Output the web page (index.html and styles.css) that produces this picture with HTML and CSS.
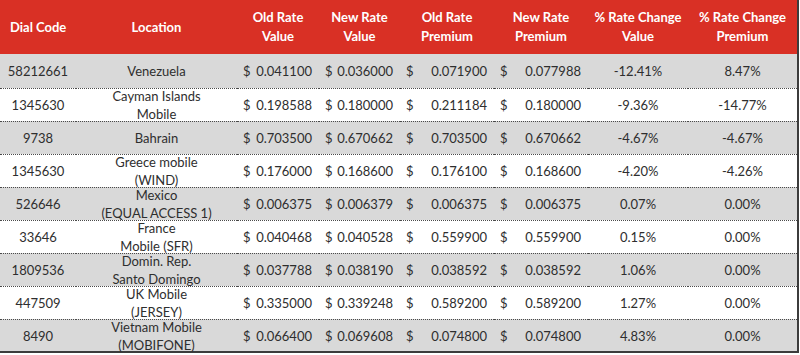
FILE: index.html
```html
<!DOCTYPE html>
<html lang="en">
<head>
    <meta charset="UTF-8">
    <title>Rate Changes</title>
    <link rel="stylesheet" href="styles.css">
</head>
<body>
    <table class="rates">
        <colgroup>
            <col class="c-dial">
            <col class="c-loc">
            <col class="c-old">
            <col class="c-new">
            <col class="c-oldp">
            <col class="c-newp">
            <col class="c-pv">
            <col class="c-pp">
        </colgroup>
        <thead>
            <tr>
                <th class="left">Dial Code</th>
                <th>Location</th>
                <th>Old Rate<br>Value</th>
                <th>New Rate<br>Value</th>
                <th>Old Rate<br>Premium</th>
                <th>New Rate<br>Premium</th>
                <th>% Rate Change<br>Value</th>
                <th>% Rate Change<br>Premium</th>
            </tr>
        </thead>
        <tbody>
            <tr class="shade">
                <td><div class="cell">58212661</div></td>
                <td><div class="cell">Venezuela</div></td>
                <td><div class="money"><span>$</span><span>0.041100</span></div></td>
                <td><div class="money"><span>$</span><span>0.036000</span></div></td>
                <td><div class="money"><span>$</span><span>0.071900</span></div></td>
                <td><div class="money"><span>$</span><span>0.077988</span></div></td>
                <td><div class="cell">-12.41%</div></td>
                <td><div class="cell">8.47%</div></td>
            </tr>
            <tr>
                <td><div class="cell">1345630</div></td>
                <td><div class="cell"><span>Cayman Islands</span><span>Mobile</span></div></td>
                <td><div class="money"><span>$</span><span>0.198588</span></div></td>
                <td><div class="money"><span>$</span><span>0.180000</span></div></td>
                <td><div class="money"><span>$</span><span>0.211184</span></div></td>
                <td><div class="money"><span>$</span><span>0.180000</span></div></td>
                <td><div class="cell">-9.36%</div></td>
                <td><div class="cell">-14.77%</div></td>
            </tr>
            <tr class="shade">
                <td><div class="cell">9738</div></td>
                <td><div class="cell">Bahrain</div></td>
                <td><div class="money"><span>$</span><span>0.703500</span></div></td>
                <td><div class="money"><span>$</span><span>0.670662</span></div></td>
                <td><div class="money"><span>$</span><span>0.703500</span></div></td>
                <td><div class="money"><span>$</span><span>0.670662</span></div></td>
                <td><div class="cell">-4.67%</div></td>
                <td><div class="cell">-4.67%</div></td>
            </tr>
            <tr>
                <td><div class="cell">1345630</div></td>
                <td><div class="cell"><span>Greece mobile</span><span>(WIND)</span></div></td>
                <td><div class="money"><span>$</span><span>0.176000</span></div></td>
                <td><div class="money"><span>$</span><span>0.168600</span></div></td>
                <td><div class="money"><span>$</span><span>0.176100</span></div></td>
                <td><div class="money"><span>$</span><span>0.168600</span></div></td>
                <td><div class="cell">-4.20%</div></td>
                <td><div class="cell">-4.26%</div></td>
            </tr>
            <tr class="shade">
                <td><div class="cell">526646</div></td>
                <td><div class="cell"><span>Mexico</span><span>(EQUAL ACCESS 1)</span></div></td>
                <td><div class="money"><span>$</span><span>0.006375</span></div></td>
                <td><div class="money"><span>$</span><span>0.006379</span></div></td>
                <td><div class="money"><span>$</span><span>0.006375</span></div></td>
                <td><div class="money"><span>$</span><span>0.006375</span></div></td>
                <td><div class="cell">0.07%</div></td>
                <td><div class="cell">0.00%</div></td>
            </tr>
            <tr>
                <td><div class="cell">33646</div></td>
                <td><div class="cell"><span>France</span><span>Mobile (SFR)</span></div></td>
                <td><div class="money"><span>$</span><span>0.040468</span></div></td>
                <td><div class="money"><span>$</span><span>0.040528</span></div></td>
                <td><div class="money"><span>$</span><span>0.559900</span></div></td>
                <td><div class="money"><span>$</span><span>0.559900</span></div></td>
                <td><div class="cell">0.15%</div></td>
                <td><div class="cell">0.00%</div></td>
            </tr>
            <tr class="shade">
                <td><div class="cell">1809536</div></td>
                <td><div class="cell"><span>Domin. Rep.</span><span>Santo Domingo</span></div></td>
                <td><div class="money"><span>$</span><span>0.037788</span></div></td>
                <td><div class="money"><span>$</span><span>0.038190</span></div></td>
                <td><div class="money"><span>$</span><span>0.038592</span></div></td>
                <td><div class="money"><span>$</span><span>0.038592</span></div></td>
                <td><div class="cell">1.06%</div></td>
                <td><div class="cell">0.00%</div></td>
            </tr>
            <tr>
                <td><div class="cell">447509</div></td>
                <td><div class="cell"><span>UK Mobile</span><span>(JERSEY)</span></div></td>
                <td><div class="money"><span>$</span><span>0.335000</span></div></td>
                <td><div class="money"><span>$</span><span>0.339248</span></div></td>
                <td><div class="money"><span>$</span><span>0.589200</span></div></td>
                <td><div class="money"><span>$</span><span>0.589200</span></div></td>
                <td><div class="cell">1.27%</div></td>
                <td><div class="cell">0.00%</div></td>
            </tr>
            <tr class="shade last">
                <td><div class="cell">8490</div></td>
                <td><div class="cell"><span>Vietnam Mobile</span><span>(MOBIFONE)</span></div></td>
                <td><div class="money"><span>$</span><span>0.066400</span></div></td>
                <td><div class="money"><span>$</span><span>0.069608</span></div></td>
                <td><div class="money"><span>$</span><span>0.074800</span></div></td>
                <td><div class="money"><span>$</span><span>0.074800</span></div></td>
                <td><div class="cell">4.83%</div></td>
                <td><div class="cell">0.00%</div></td>
            </tr>
        </tbody>
    </table>
</body>
</html>
```

FILE: styles.css
```css
body {
    margin: 0;
    background: #fff;
    font-family: Lato, "Open Sans", sans-serif;
    color: #2e2e2e;
}

/* Rate table */
.rates {
    width: 799px;
    table-layout: fixed;
    border-collapse: separate;
    border-spacing: 0;
    border-right: 2px solid #3c3c3c;
    border-bottom: 2px solid #3c3c3c;
}

.c-dial { width: 76px; }
.c-loc { width: 161px; }
.c-old { width: 82px; }
.c-new { width: 81px; }
.c-oldp { width: 94px; }
.c-newp { width: 94px; }
.c-pv { width: 100px; }
.c-pp { width: 109px; }

.rates th {
    height: 54px;
    padding: 0;
    background: #d93025;
    color: #fff;
    font-size: 13px;
    font-weight: bold;
    line-height: 19px;
    text-align: center;
}

.rates th.left {
    text-align: left;
    padding-left: 10px;
}

.rates td {
    padding: 0;
    font-size: 13px;
    border-top: 1px dotted #4a4a4a;
}

.rates tbody tr:first-child td {
    border-top: none;
}

.rates tr.shade td {
    background: #d9d9d9;
}

.cell,
.money {
    height: 32px;
    white-space: nowrap;
}

.rates tbody tr:first-child .cell,
.rates tbody tr:first-child .money {
    height: 34px;
}

.rates tr.last .cell,
.rates tr.last .money {
    height: 31px;
}

.cell {
    display: flex;
    flex-direction: column;
    justify-content: center;
    align-items: center;
    line-height: 18px;
}

.money {
    display: flex;
    align-items: center;
    justify-content: space-between;
    padding: 0 7px 0 6px;
}
```
